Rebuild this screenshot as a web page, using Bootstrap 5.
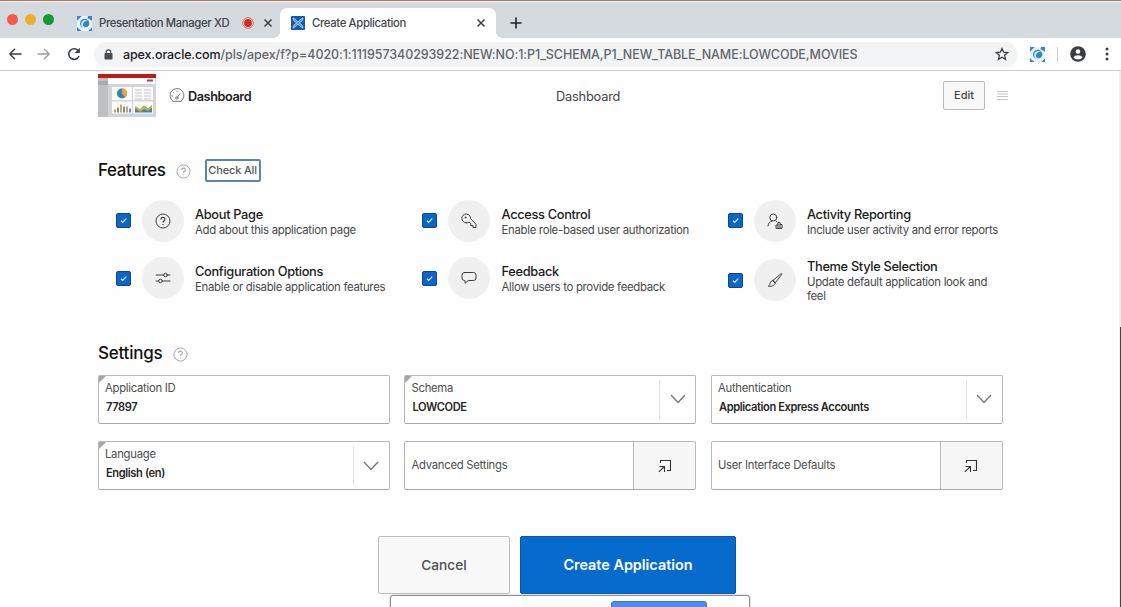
<!DOCTYPE html>
<html lang="en">
<head>
<meta charset="utf-8">
<meta name="viewport" content="width=device-width, initial-scale=1">
<title>Create Application</title>
<link href="https://cdn.jsdelivr.net/npm/bootstrap@5.3.0/dist/css/bootstrap.min.css" rel="stylesheet">
<style>
body{font-family:Inter,"Liberation Sans",sans-serif;color:#222;background:#fefefe;height:607px;overflow:hidden;font-size:12px;line-height:1.2}
svg{display:block;flex:none}
.line-svg{fill:none;stroke:currentColor;stroke-linecap:round;stroke-linejoin:round}
.tabstrip{height:38px;background:#d5dade;border-top:1px solid #b5766a;box-shadow:inset 0 1px #eef0f2;padding-left:7px}
.dot{width:11px;height:11px;border-radius:50%;margin-right:7px}
.browser-tab{height:30px;font-size:11.3px;font-weight:500;letter-spacing:-.34px;color:#42464a}
.browser-tab span{position:relative;top:1px}
.tab-back{width:206px;margin-left:14px;padding-left:2px}
.tab-active{width:216px;margin-left:-1px;background:#fff;border-radius:7px 7px 0 0;padding-left:11px;position:relative}
.tab-active::before,.tab-active::after{content:"";position:absolute;bottom:0;width:7px;height:7px}
.tab-active::before{left:-7px;background:radial-gradient(circle at 0 0,transparent 7px,#fff 7.3px)}
.tab-active::after{right:-7px;background:radial-gradient(circle at 100% 0,transparent 7px,#fff 7.3px)}
.toolbar{height:33px;background:#fff;border-bottom:1px solid #cfcfcf;padding-left:8px;color:#3c4043}
.omnibox{width:924px;height:25px;border-radius:13px;background:#f1f3f4;margin-left:13px;padding:0 9px 0 10px;font-size:12.5px;font-weight:500;letter-spacing:-.07px;color:#62666a}
.omnibox b{font-weight:500;color:#202124;letter-spacing:-.13px}
.page-body{width:905px;margin-left:98px}
.dash-row{height:43px;margin-top:3px}
.dash-name{font-size:12.7px;font-weight:600;letter-spacing:-.42px;color:#222;width:368px;padding-top:2px}
.dash-type{font-size:12.8px;letter-spacing:-.2px;color:#444;padding-top:2px}
.btn-edit{width:42px;height:29px;border:1px solid #bbb;border-radius:2px;background:#f8f8f8;font-size:11px;font-weight:500;color:#444;padding:0}
.section-title{font-size:17px;font-weight:500;letter-spacing:-.38px;color:#111;margin:0;line-height:22px}
.btn-check-all{width:56px;height:23px;border:2px solid #5c85ae;border-radius:2px;font-size:11px;font-weight:500;letter-spacing:-.15px;color:#555;padding:0;background:#fff}
.page-body .row{--bs-gutter-x:14.5px}
.feat{padding-left:18px;height:57.5px}
.tick{width:15px;height:15px;background:#0c66c2;border:1px solid #074a91;border-radius:2px;color:#fff;flex:none}
.disc{width:42px;height:42px;border-radius:50%;background:#f0f0f0;margin:0 11px 0 11px;color:#3c3c3c;flex:none}
.feat-copy{padding-top:1px}
.feat-title{font-size:12.8px;font-weight:500;letter-spacing:-.32px;color:#1c1c1c;line-height:17px;white-space:nowrap}
.feat-desc{font-size:11.4px;letter-spacing:-.31px;color:#484848;line-height:14px}
.settings-grid{row-gap:17.5px}
.field{height:49px;border:1px solid #b9b9b9;border-bottom-color:#a9a9a9;border-radius:2px;background:#fff;position:relative}
.field.req::before{content:"";position:absolute;left:0;top:0;border-top:7px solid #a5a5a5;border-right:7px solid transparent}
.field-text{padding:5px 0 0 6px;color:#4d4d4d;font-size:11.3px;letter-spacing:-.27px}
.field-text div{line-height:14px}
.field-text strong{display:block;font-weight:600;color:#262626;margin:5px 0 0 1px;line-height:14px;font-size:11.1px;letter-spacing:-.38px}
.chev{width:36px;border-left:1px solid #e3e3e3;color:#757575;margin:4px 0}
.opener{width:62px;border-left:1px solid #b9b9b9;background:#f7f7f7;color:#333}
.btn-big{height:58px;border-radius:2px;padding:0}
.btn-cancel{width:132px;background:#f8f8f8;border:1px solid #bdbdbd;color:#505050;font-weight:500;font-size:13.7px}
.btn-create{width:216px;background:#066bcd;border:1px solid #0758a5;color:#fff;font-weight:600;font-size:14.4px}
.share-popup{position:absolute;left:390px;top:595px;width:360px;height:40px;background:#fff;border:1px solid #8e8e8e;border-radius:3px;box-shadow:0 0 2px #aaa;padding:5px 0 0 220px}
.share-popup span{display:block;width:96px;height:20px;background:#4b8df0;border:1px solid #3c6fc5;border-radius:3px}
.scroll-edge{position:absolute;right:0;top:71px;width:2px;height:536px;background:linear-gradient(#ececec 256px,#444 256px);border-left:1px solid #eee}
</style>
</head>
<body class="position-relative">
<svg width="0" height="0" class="position-absolute">
  <symbol id="i-swirl" viewBox="0 0 16 16"><path d="M0 0h16v16H0z" fill="#4384bd"/><path d="M0 5L5 0h7l-1 2 5 3v7l-4 4H5l-5-4z" fill="#e7f3fb"/><circle cx="8.200" cy="8" r="5" fill="#3285cb"/><path d="M4.500 10C3.500 5 8 3 12.500 5 8.500 4.700 6.200 7 6.400 10.200 8 13 12 12 14 9 13 14.500 5.500 14.500 4.500 10z" fill="#fff" opacity=".75"/></symbol>
  <symbol id="i-check" viewBox="0 0 13 13"><path d="M4 6.800l1.700 1.600L9.200 4.700" fill="none" stroke="#dcebfa" stroke-width="1.200"/></symbol>
  <symbol id="i-help" viewBox="0 0 16 16"><circle cx="8" cy="8" r="7" fill="none" stroke="currentColor"/><path d="M6 6.400C6 3.800 10 3.800 10 6.300 10 7.800 8 7.700 8 9.600M8 11.100v1" fill="none" stroke="currentColor" stroke-width="1.200"/></symbol>
  <symbol id="i-x" viewBox="0 0 10 10"><path d="M1.500 1.500l7 7m0-7l-7 7" stroke="#3c4043" stroke-width="1.500"/></symbol>
  <symbol id="i-open" viewBox="0 0 14 14"><path d="M2.500 4V1.500h10v10H9M.8 12.800L6.500 7.500M1.500 7.500h5v5.500" fill="none" stroke="currentColor" stroke-width="1.100"/></symbol>
  <symbol id="i-chev" viewBox="0 0 16 10"><path d="M1 1l7 7.500L15 1" fill="none" stroke="currentColor" stroke-width="1.300"/></symbol>
</svg>

<header class="tabstrip d-flex align-items-end">
  <div class="d-flex align-self-center">
    <span class="dot" style="background:#f25a4b"></span><span class="dot" style="background:#f0ac2c"></span><span class="dot" style="background:#129b33"></span>
  </div>
  <div class="browser-tab tab-back d-flex align-items-center">
    <svg width="15" height="15"><use href="#i-swirl"/></svg>
    <span class="text-nowrap" style="margin-left:7px;width:131px">Presentation Manager XD</span>
    <svg width="12" height="12" viewBox="0 0 12 12" style="margin-left:12px"><circle cx="6" cy="6" r="5.300" fill="none" stroke="#d9513e" stroke-width=".8"/><circle cx="6" cy="6" r="3.900" fill="#d42f20"/></svg>
    <svg width="10" height="10" style="margin-left:9px"><use href="#i-x"/></svg>
  </div>
  <div class="browser-tab tab-active d-flex align-items-center">
    <svg width="14" height="14" viewBox="0 0 14 14"><rect width="14" height="14" rx="1" fill="#1459a6"/><path d="M2 2c2 0 3 2 5 4 2-2 3-4 5-4 0 3-2 4-4 5 2 1 4 2 4 5-2 0-3-2-5-4-2 2-3 4-5 4 0-3 2-4 4-5-2-1-4-2-4-5z" fill="#5c9bdc" stroke="#b3d3f2" stroke-width=".8"/></svg>
    <span class="text-nowrap" style="margin-left:7px">Create Application</span>
    <svg class="ms-auto" width="10" height="10" style="margin-right:10px"><use href="#i-x"/></svg>
  </div>
  <svg width="12" height="12" viewBox="0 0 12 12" style="margin:0 0 9px 14px"><path d="M6 .5v11M.5 6h11" stroke="#222" stroke-width="1.600"/></svg>
</header>

<nav class="toolbar d-flex align-items-center">
  <svg class="line-svg" width="14" height="12" viewBox="0 0 14 12" stroke-width="1.500"><path d="M13 6H2M6.500 1.300L1.800 6l4.700 4.700"/></svg>
  <svg class="line-svg" width="14" height="12" viewBox="0 0 14 12" stroke-width="1.300" style="margin-left:15px;color:#999c9f"><path d="M1 6h11M7.500 1.300L12.200 6l-4.700 4.700"/></svg>
  <svg width="14" height="14" viewBox="0 0 14 14" style="margin-left:16px"><path d="M12 9a5.300 5.300 0 1 1-.5-4.800" fill="none" stroke="#3c4043" stroke-width="1.600"/><path d="M12.900.8v5.300H7.600z" fill="#3c4043"/></svg>
  <div class="omnibox d-flex align-items-center">
    <svg width="9" height="11" viewBox="0 0 9 11"><rect x=".5" y="4" width="8" height="6.500" rx=".8" fill="#4b4f53"/><path d="M2.300 4.500V3a2.200 2.200 0 0 1 4.400 0v1.500" fill="none" stroke="#4b4f53" stroke-width="1.200"/></svg>
    <span class="text-nowrap" style="margin-left:10px"><b>apex.oracle.com</b>/pls/apex/f?p=4020:1:111957340293922:NEW:NO:1:P1_SCHEMA,P1_NEW_TABLE_NAME:LOWCODE,MOVIES</span>
    <svg class="ms-auto" width="14" height="14" viewBox="0 0 14 14"><path d="M7 1.500l1.650 3.700 4 .4-3 2.700.9 4L7 10.200l-3.550 2.100.9-4-3-2.700 4-.4z" fill="none" stroke="#3c4043" stroke-width="1.300"/></svg>
  </div>
  <svg width="15" height="15" style="margin-left:12px"><use href="#i-swirl"/></svg>
  <span style="width:1px;height:15px;background:#ccc;margin:0 12px"></span>
  <svg width="16" height="16" viewBox="0 0 16 16"><circle cx="8" cy="8" r="7.800" fill="#3a3d40"/><circle cx="8" cy="5.500" r="2.300" fill="#fff"/><path d="M3.400 11.300C5 8.600 11 8.600 12.600 11.300 10.500 14.300 5.500 14.300 3.400 11.300z" fill="#fff"/></svg>
  <svg width="4" height="14" viewBox="0 0 4 14" style="margin-left:19px" fill="#3c4043"><circle cx="2" cy="2" r="1.500"/><circle cx="2" cy="7" r="1.500"/><circle cx="2" cy="12" r="1.500"/></svg>
</nav>

<main class="page-body">
  <div class="dash-row d-flex align-items-center">
    <svg width="58" height="43" viewBox="0 0 58 43"><path d="M0 0h58v43H0z" fill="#d2d4d6"/><path d="M0 0h58v4H0z" fill="#be1b16"/><path d="M10 4h47v6H10z" fill="#fff"/><path d="M0 4h10v39H0z" fill="#bfc1c3"/><path d="M0 7h10v4H0z" fill="#a9abae"/><path d="M49 5.500h6v2h-6z" fill="#c23a42"/><path d="M14 13h20v13H14zM35 13h20v13H35zM14 27.500h20v12H14zM35 27.500h20v12H35z" fill="#fbfbfb"/><circle cx="24" cy="19.500" r="5" fill="#2e83bb"/><path d="M24 19.500v-5a5 5 0 0 1 3 9z" fill="#eba03c"/><path d="M37 16h16M37 19h16M37 22h16M37 25h16" stroke="#c3c3c3" stroke-dasharray="7 2"/><path d="M17 38.500v-3M23 38.500v-8M29 38.500v-6" stroke="#e6a13d" stroke-width="2"/><path d="M20 38.500v-5M26 38.500v-6M32 38.500v-4" stroke="#438fc0" stroke-width="1.800"/><path d="M37 38.500v-6l5 3 4-4 4 3 4-3v7z" fill="#3a86b4"/><path d="M37 34v-2l5 3 4-3 4 3 4-4v3l-4 3-4-2-4 3z" fill="#d8ac36"/></svg>
    <svg class="line-svg" width="16" height="16" viewBox="0 0 16 16" style="margin:0 3px 0 13px;color:#777"><path d="M4 13.300A7 7 0 1 1 12 13.300M4 13.300h8M8.300 9.400L11 5.500" /><circle cx="7.800" cy="10" r="1.200"/><path d="M3 8h.5M4.500 4.500l.3.300M8 3v.5"/></svg>
    <span class="dash-name">Dashboard</span>
    <span class="dash-type">Dashboard</span>
    <button class="btn btn-edit ms-auto">Edit</button>
    <svg width="11" height="11" viewBox="0 0 11 11" style="margin:0 -5px 0 12px"><path d="M0 1.500h11M0 4h11M0 6.500h11M0 9.500h11" stroke="#c4c4c4"/></svg>
  </div>

  <div class="d-flex align-items-center" style="margin-top:41px;height:24px">
    <h2 class="section-title">Features</h2>
    <svg width="15" height="15" style="margin:3px 14px 0 10px;color:#a5a5a5"><use href="#i-help"/></svg>
    <button class="btn btn-check-all text-nowrap" style="margin-top:1px">Check All</button>
  </div>

  <div class="row" style="margin-top:10px">
    <div class="col-4">
      <div class="feat d-flex align-items-center"><span class="tick"><svg width="13" height="13"><use href="#i-check"/></svg></span>
        <span class="disc d-flex align-items-center justify-content-center"><svg width="16" height="16"><use href="#i-help"/></svg></span>
        <div class="feat-copy"><div class="feat-title">About Page</div><div class="feat-desc">Add about this application page</div></div></div>
      <div class="feat d-flex align-items-center"><span class="tick"><svg width="13" height="13"><use href="#i-check"/></svg></span>
        <span class="disc d-flex align-items-center justify-content-center"><svg class="line-svg" width="16" height="14" viewBox="0 0 16 14"><path d="M1 4h7.500M12.500 4H15M1 10h2.500M7.500 10H15"/><circle cx="10.500" cy="4" r="1.800"/><circle cx="5.500" cy="10" r="1.800"/></svg></span>
        <div class="feat-copy"><div class="feat-title">Configuration Options</div><div class="feat-desc">Enable or disable application features</div></div></div>
    </div>
    <div class="col-4">
      <div class="feat d-flex align-items-center"><span class="tick"><svg width="13" height="13"><use href="#i-check"/></svg></span>
        <span class="disc d-flex align-items-center justify-content-center"><svg class="line-svg" width="16" height="16" viewBox="0 0 16 16"><path d="M5.300 9.800A4.400 4.400 0 1 1 9.600 5.700L15 11.300v3.200h-3v-2H9.800v-2L8 9.200a4.400 4.400 0 0 1-2.700.6z"/><circle cx="4.500" cy="4.500" r=".5"/></svg></span>
        <div class="feat-copy"><div class="feat-title">Access Control</div><div class="feat-desc">Enable role-based user authorization</div></div></div>
      <div class="feat d-flex align-items-center"><span class="tick"><svg width="13" height="13"><use href="#i-check"/></svg></span>
        <span class="disc d-flex align-items-center justify-content-center"><svg class="line-svg" width="16" height="14" viewBox="0 0 16 14"><path d="M3.500 1.500h9A2.500 2.500 0 0 1 15 4v3a2.500 2.500 0 0 1-2.500 2.500H7.300L4 12.300V9.500h-.5A2.500 2.500 0 0 1 1 7V4a2.500 2.500 0 0 1 2.500-2.500z"/></svg></span>
        <div class="feat-copy"><div class="feat-title">Feedback</div><div class="feat-desc">Allow users to provide feedback</div></div></div>
    </div>
    <div class="col-4">
      <div class="feat d-flex align-items-center" style="padding-left:17px"><span class="tick"><svg width="13" height="13"><use href="#i-check"/></svg></span>
        <span class="disc d-flex align-items-center justify-content-center"><svg class="line-svg" width="16" height="16" viewBox="0 0 16 16"><circle cx="6.300" cy="4.500" r="3.500"/><path d="M1 13c.3-3 1.800-4.500 4-5M9 8l1 .7M9 15v-3h2V9.500h2v2h2V15zM11 12v3M13 11.500V15"/></svg></span>
        <div class="feat-copy"><div class="feat-title">Activity Reporting</div><div class="feat-desc">Include user activity and error reports</div></div></div>
      <div class="feat d-flex align-items-center" style="padding-left:17px;height:61.5px"><span class="tick"><svg width="13" height="13"><use href="#i-check"/></svg></span>
        <span class="disc d-flex align-items-center justify-content-center"><svg class="line-svg" width="16" height="16" viewBox="0 0 16 16"><path d="M6 8.500L13.500 2c1-.7 1.500 0 1 .8L8.300 10.700zM6 8.500l2.300 2.200C8 13.500 4.500 14.800 1.300 14.300c1.500-.8 1.500-2 2-3.500.5-1.500 1.500-2.300 2.700-2.300z"/></svg></span>
        <div style="width:195px"><div class="feat-title">Theme Style Selection</div><div class="feat-desc">Update default application look and feel</div></div></div>
    </div>
  </div>

  <div class="d-flex align-items-center" style="margin-top:29.5px;height:24px">
    <h2 class="section-title" style="letter-spacing:-.22px">Settings</h2>
    <svg width="15" height="15" style="margin:3px 0 0 10px;color:#a5a5a5"><use href="#i-help"/></svg>
  </div>

  <div class="row settings-grid" style="margin-top:10px">
    <div class="col-4"><div class="field req"><div class="field-text"><div>Application ID</div><strong>77897</strong></div></div></div>
    <div class="col-4"><div class="field req d-flex"><div class="field-text flex-fill"><div>Schema</div><strong>LOWCODE</strong></div><div class="chev d-flex align-items-center justify-content-center"><svg width="16" height="10"><use href="#i-chev"/></svg></div></div></div>
    <div class="col-4"><div class="field d-flex"><div class="field-text flex-fill"><div>Authentication</div><strong>Application Express Accounts</strong></div><div class="chev d-flex align-items-center justify-content-center"><svg width="16" height="10"><use href="#i-chev"/></svg></div></div></div>
    <div class="col-4"><div class="field req d-flex"><div class="field-text flex-fill"><div>Language</div><strong>English (en)</strong></div><div class="chev d-flex align-items-center justify-content-center"><svg width="16" height="10"><use href="#i-chev"/></svg></div></div></div>
    <div class="col-4"><div class="field d-flex"><div class="field-text flex-fill align-self-center pt-0">Advanced Settings</div><div class="opener d-flex align-items-center justify-content-center"><svg width="14" height="14"><use href="#i-open"/></svg></div></div></div>
    <div class="col-4"><div class="field d-flex"><div class="field-text flex-fill align-self-center pt-0">User Interface Defaults</div><div class="opener d-flex align-items-center justify-content-center"><svg width="14" height="14"><use href="#i-open"/></svg></div></div></div>
  </div>

  <div class="d-flex" style="margin:46px 0 0 280px;gap:10px">
    <button class="btn btn-big btn-cancel">Cancel</button>
    <button class="btn btn-big btn-create">Create Application</button>
  </div>
</main>
<div class="share-popup"><span></span></div>
<div class="scroll-edge"></div>
<script src="https://cdn.jsdelivr.net/npm/bootstrap@5.3.0/dist/js/bootstrap.bundle.min.js"></script>
</body>
</html>
